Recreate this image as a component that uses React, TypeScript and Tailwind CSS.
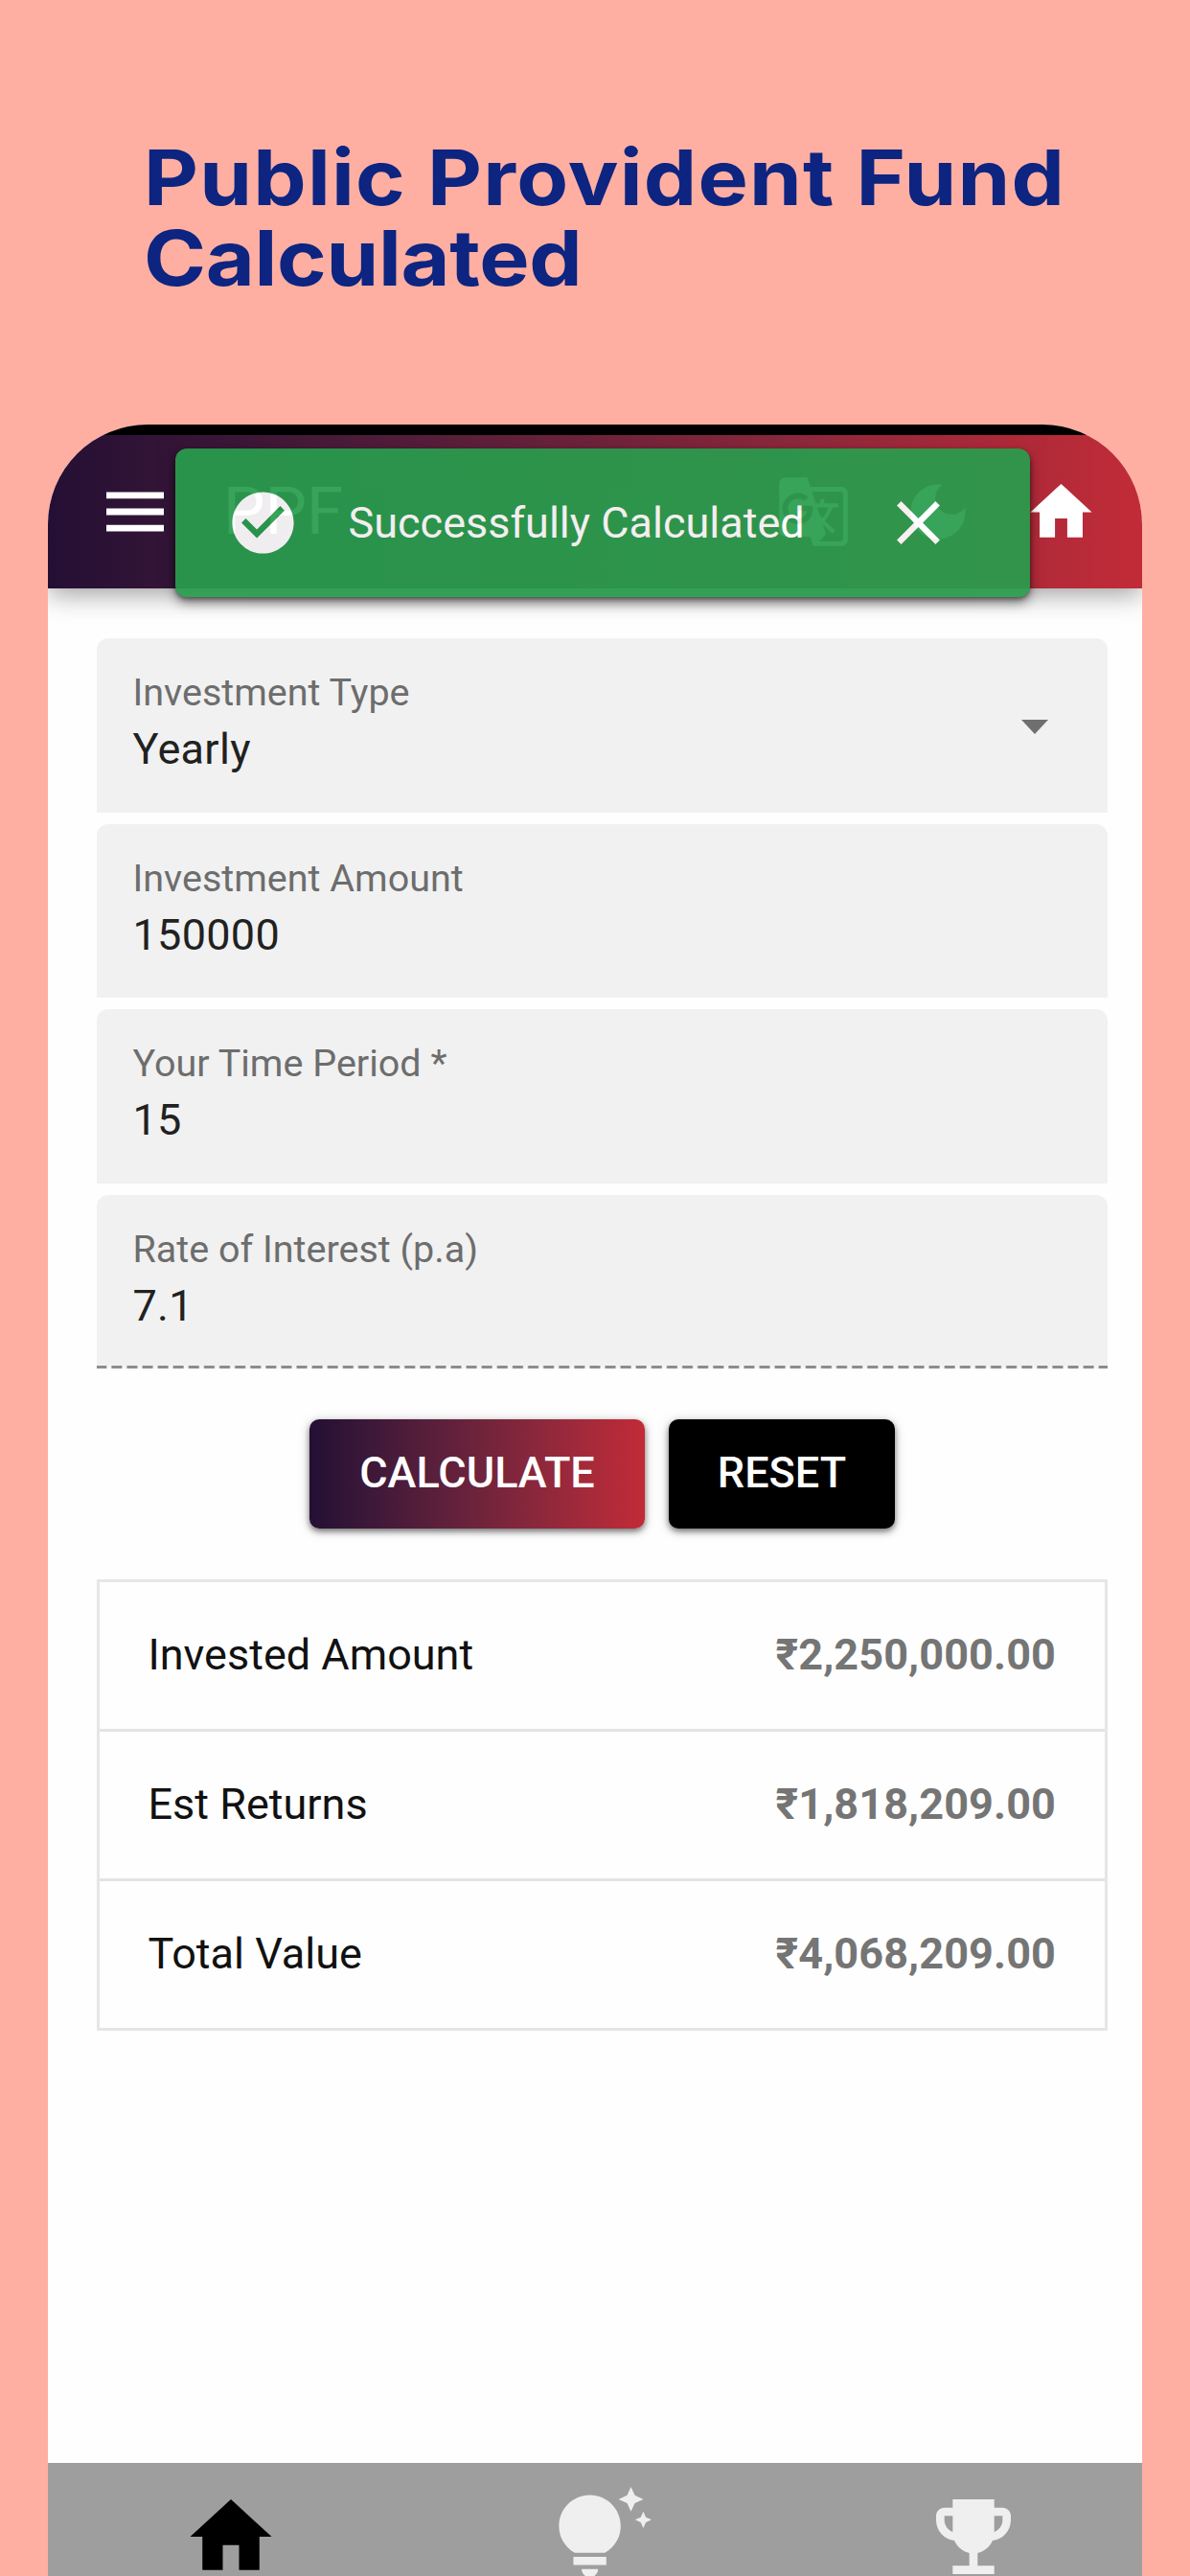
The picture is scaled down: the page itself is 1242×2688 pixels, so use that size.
import type { ReactNode } from "react";

function Icon({ d, className }: { d: string; className: string }) {
  return (
    <svg viewBox="0 0 24 24" preserveAspectRatio="none" fill="currentColor" className={className} aria-hidden="true">
      <path d={d} />
    </svg>
  );
}

const HOME = "M10 20v-6h4v6h5v-8h3L12 3 2 12h3v8z";
const MENU = "M3 18h18v-2H3v2zm0-5h18v-2H3v2zm0-7v2h18V6H3z";
const TRANSLATE =
  "M21 4H11l-1-3H3c-1.1 0-2 .9-2 2v15c0 1.1.9 2 2 2h8l1 3h9c1.1 0 2-.9 2-2V6c0-1.1-.9-2-2-2zM7 16c-2.76 0-5-2.24-5-5s2.240-5 5-5c1.350 0 2.480.5 3.350 1.300L9.030 8.570c-.38-.36-1.040-.78-2.030-.78-1.740 0-3.150 1.440-3.150 3.210S5.260 14.210 7 14.210c2.010 0 2.840-1.440 2.920-2.410H7v-1.710h4.680c.07.31.12.61.12 1.020C11.800 13.970 9.890 16 7 16zm6.170-5.420h3.700c-.43 1.250-1.110 2.430-2.050 3.470-.31-.35-.6-.72-.86-1.100l-.79-2.370zm8.330 9.920c0 .55-.45 1-1 1H14l2-2.500-1.040-3.100 3.100 3.100.92-.92-3.300-3.250.02-.02c1.130-1.250 1.930-2.690 2.400-4.220H20v-1.300h-4.530V8h-1.290v1.290h-1.440L11.460 5.500h9.040c.55 0 1 .45 1 1v14z";
const MOON =
  "M12 3c-4.970 0-9 4.030-9 9s4.030 9 9 9 9-4.030 9-9c0-.46-.04-.92-.1-1.360-.98 1.370-2.580 2.260-4.400 2.260-2.980 0-5.400-2.420-5.400-5.400 0-1.810.89-3.420 2.260-4.400-.44-.06-.9-.1-1.360-.1z";
const CHECK =
  "M12 2C6.480 2 2 6.480 2 12s4.480 10 10 10 10-4.480 10-10S17.520 2 12 2zm-2 15l-5-5 1.410-1.410L10 14.170l7.590-7.590L19 8l-9 9z";
const CLOSE =
  "M19 6.410L17.590 5 12 10.590 6.410 5 5 6.410 10.590 12 5 17.590 6.410 19 12 13.410 17.590 19 19 17.590 13.410 12z";
const BULB =
  "M7 20h4c0 1.100-.9 2-2 2s-2-.9-2-2zm-2-1h8v-2H5v2zm11.500-9.500c0 3.820-2.660 5.860-3.770 6.500H5.270C4.160 15.360 1.500 13.320 1.500 9.500 1.500 5.360 4.860 2 9 2s7.500 3.360 7.500 7.500zm4.870-2.130L20 8l1.370.63L22 10l.63-1.370L24 8l-1.370-.63L22 6l-.63 1.370zM19 6l.94-2.060L22 3l-2.060-.94L19 0l-.94 2.060L16 3l2.060.94L19 6z";
const TROPHY =
  "M19 5h-2V3H7v2H5c-1.100 0-2 .9-2 2v1c0 2.550 1.920 4.630 4.390 4.940.63 1.500 1.980 2.630 3.610 2.960V19H7v2h10v-2h-4v-3.100c1.630-.33 2.980-1.460 3.610-2.960C19.080 12.630 21 10.550 21 8V7c0-1.100-.9-2-2-2zM5 8V7h2v3.820C5.840 10.400 5 9.300 5 8zm14 0c0 1.300-.84 2.400-2 2.820V7h2v1z";

function Field({ label, value, children }: { label: string; value: string; children?: ReactNode }) {
  return (
    <div className="flex h-[181.5px] justify-between rounded-t-[12px] bg-[#f1f1f1] pl-[38px] pr-[62px]">
      <div className="pt-[37px]">
        <div className="text-[39.5px] leading-[40px] text-[#6d6d6d]">{label}</div>
        <div className="mt-[14px] text-[45px] leading-[50px] tracking-[0.3px] text-[#212121]">{value}</div>
      </div>
      {children}
    </div>
  );
}

function Row({ label, value }: { label: string; value: string }) {
  return (
    <div className="flex h-[156px] items-center justify-between border-b-[3px] border-[#e4e4e4] pb-[2px] pl-[51px] pr-[51px] text-[45px] leading-[50px]">
      <span className="text-[#111111]">{label}</span>
      <span className="font-bold tracking-[0.1px] text-[#757575]">{value}</span>
    </div>
  );
}

export default function App() {
  return (
    <main className="flex h-[2688px] w-[1242px] flex-col overflow-hidden bg-[#ffafa2] font-['Roboto',sans-serif]">
      <h1 className="h-[443px] shrink-0 whitespace-nowrap pl-[150px] pt-[143px] font-['Inter',sans-serif] text-[80px] font-bold leading-[84px] text-[#0d2481]">
        <span className="block origin-left scale-x-110 tracking-[1.100px]">Public Provident Fund</span>
        <span className="block origin-left scale-x-110 tracking-[-0.3px]">Calculated</span>
      </h1>

      <section className="relative mx-[50px] flex h-[2245px] shrink-0 flex-col overflow-hidden rounded-t-[104px] bg-[#fefefe]">
        <div className="h-[11px] shrink-0 bg-black" />
        <header className="flex h-[160px] shrink-0 items-center bg-linear-to-r from-[#240f34] to-[#c22b37] pl-[51px] pr-[46px] text-white shadow-[0_6px_26px_rgba(0,0,0,0.38)]">
          <Icon d={MENU} className="h-[82px] w-[80px]" />
          <span className="ml-[52px] text-[69px] leading-[80px]">PPF</span>
          <div className="ml-auto flex items-center">
            <Icon d={TRANSLATE} className="h-[78px] w-[78px]" />
            <Icon d={MOON} className="ml-[53px] h-[76px] w-[76px]" />
            <Icon d={HOME} className="ml-[52px] h-[79px] w-[77px]" />
          </div>
        </header>

        <div className="absolute left-[132.500px] top-[25px] flex h-[155px] w-[892px] items-center rounded-[12px] bg-[#289d4d] pl-[53px] pr-[78px] text-white opacity-[0.925] shadow-[0_6px_12px_rgba(0,0,0,0.5),0_2px_4px_rgba(0,0,0,0.4)]">
          <Icon d={CHECK} className="h-[77px] w-[77px]" />
          <span className="ml-[51px] whitespace-nowrap text-[45px] leading-[50px]">Successfully Calculated</span>
          <Icon d={CLOSE} className="ml-auto h-[77px] w-[77px]" />
        </div>

        <div className="flex flex-col gap-[12px] pl-[50.500px] pr-[36px] pt-[52px]">
          <Field label="Investment Type" value="Yearly">
            <svg viewBox="0 0 28 15" className="mt-[85px] h-[15px] w-[28px]" fill="#6f6f6f" aria-hidden="true">
              <path d="M0 0h28L14 15z" />
            </svg>
          </Field>
          <Field label="Investment Amount" value="150000" />
          <Field label="Your Time Period *" value="15" />
          <div>
            <Field label="Rate of Interest (p.a)" value="7.1" />
            <div className="-mt-[3px] h-[3px] bg-[repeating-linear-gradient(90deg,#8c8c8c_0_9.500px,#f6f6f6_11px_14.500px,#8c8c8c_16.100px)]" />
          </div>
        </div>

        <div className="mt-[53px] flex gap-[25px] pl-[273px] text-[45px] font-medium leading-[50px] text-white">
          <button className="h-[114px] w-[350px] rounded-[10px] bg-linear-to-r from-[#240f34] to-[#c22b37] pb-[3px] shadow-[0_3px_6px_rgba(0,0,0,0.5),0_2px_14px_rgba(0,0,0,0.15)]">CALCULATE</button>
          <button className="h-[114px] w-[236px] rounded-[10px] bg-black pb-[3px] shadow-[0_3px_6px_rgba(0,0,0,0.5),0_2px_14px_rgba(0,0,0,0.15)]">RESET</button>
        </div>

        <div className="ml-[50.500px] mr-[36px] mt-[53px] border-x-[3px] border-t-[3px] border-[#e6e6e6]">
          <Row label="Invested Amount" value="₹2,250,000.00" />
          <Row label="Est Returns" value="₹1,818,209.00" />
          <Row label="Total Value" value="₹4,068,209.00" />
        </div>

        <nav className="mt-auto flex h-[118px] shrink-0 justify-between bg-[#9e9e9e] pl-[140px] pr-[124px] pt-[25px] text-[#efefef]">
          <Icon d={HOME} className="h-[104px] w-[102px] shrink-0 text-black" />
          <Icon d={BULB} className="h-[103px] w-[103px] shrink-0" />
          <Icon d={TROPHY} className="h-[104px] w-[104px] shrink-0" />
        </nav>
      </section>
    </main>
  );
}
